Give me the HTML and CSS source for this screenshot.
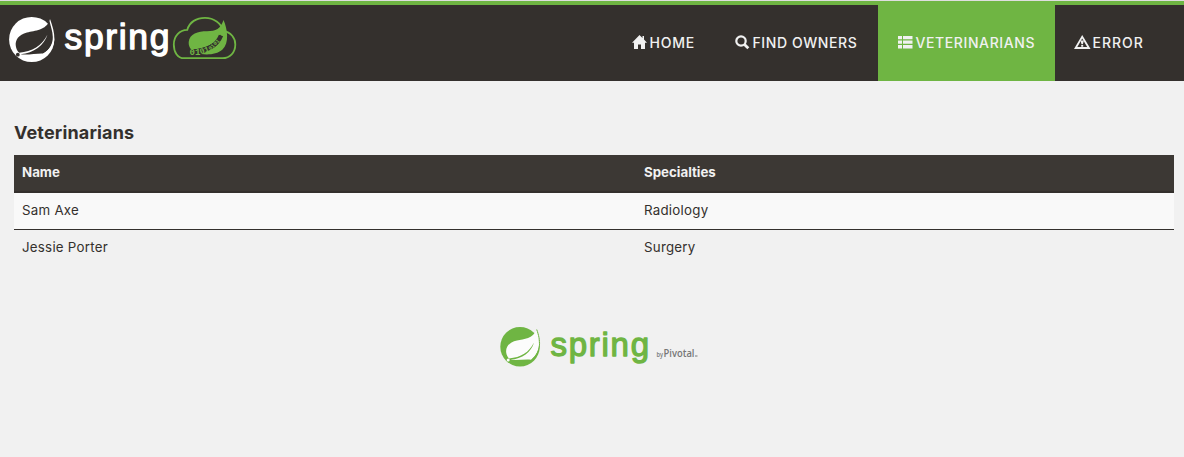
FILE: index.html
```html
<!DOCTYPE html>
<html lang="en">
<head>
<meta charset="utf-8">
<title>PetClinic</title>
<link rel="stylesheet" href="styles.css">
</head>
<body>
<header class="navbar">
  <svg class="brand" width="240" height="76" viewBox="0 5 240 76">
    <g class="brand-light">
      <circle cx="31.7" cy="39.5" r="22.6"/>
      <path class="leaf-dark" d="M49.8 20C46 30.500 35 30.500 27 32.500C18.500 34.800 15 40 15.800 46C16.200 49 17.500 51.200 19.200 52.800C32 51.500 42 46 47.500 34.500C44 45.500 34 53 20.500 54.200C27 55.300 36 53.300 43 53.500C50 50 53.500 43 53.500 37C53.500 31 51.500 25 49.800 20Z"/>
      <path d="M50 19C52.500 26 54.800 33 54.300 40C53.700 47 50 53 44 56.500L43 54C50 50 53 43 52.800 37C52.700 31 50.500 26 49.500 21Z"/>
      <circle class="leaf-dark" cx="17.800" cy="54.700" r="1.900"/>
      <text class="wordmark" x="64.500" y="49" font-size="35.500" textLength="105" lengthAdjust="spacing">spring</text>
    </g>
    <path class="cloud" d="M184 58.200C177.500 58.200 173.800 52 173.800 44.500C173.800 36 179.500 30 187.300 29.800C189.500 22 196.500 17.800 205 17.800C214 17.800 221 23 223.500 31.200C231 32.200 235.300 38 235.300 44.500C235.300 52.500 230 58.200 222.500 58.200Z"/>
    <path class="green" d="M223.500 20C220.500 29 216 31 207 31.200C198 31.200 189.500 33.500 188.700 42C188.500 45 189.400 47.500 191 49.200C205 49.500 216 43 221 34.500C222 42 214 49.500 201 54C208 55 217 54.500 222.500 49.500C229.500 43 227.500 29 223.500 20Z"/>
    <path class="band" d="M190 52C206 51.500 217 45.500 221 35.500"/>
    <text class="bits" x="189.500" y="55" font-size="9" textLength="11" lengthAdjust="spacingAndGlyphs">01</text>
    <text class="bits" x="200.800" y="54.300" font-size="8" transform="rotate(-20 200.800 54.300)">01</text>
    <text class="bits" x="210.500" y="50.500" font-size="5.500" transform="rotate(-45 210.500 50.500)">0101</text>
  </svg>
  <nav class="menu">
    <a class="item home"><svg width="15" height="15" viewBox="0 0 15 15"><path d="M7.500 0L0 7.700H2V14H6V9.500H9V14H13V7.700H15L12 4.500V1H10.500V3Z"/></svg><span>HOME</span></a>
    <a class="item find"><svg width="15" height="15" viewBox="0 0 15 15"><circle class="ring" cx="6" cy="6" r="4.700"/><path class="handle" d="M9.500 9.500L13.300 13.300"/></svg><span>FIND OWNERS</span></a>
    <a class="item vets active"><svg width="15" height="15" viewBox="0 0 15 15"><path d="M0 1H4V4.300H0ZM5 1H14.500V4.300H5ZM0 5.500H4V8.800H0ZM5 5.500H14.500V8.800H5ZM0 10H4V13.500H0ZM5 10H14.500V13.500H5Z"/></svg><span>VETERINARIANS</span></a>
    <a class="item error"><svg width="17" height="15" viewBox="0 0 17 15"><path fill-rule="evenodd" d="M8.200 0L16.600 14H0ZM8.200 3.500L3.300 12H13.200Z"/><path d="M6.500 5.500H9.900L8.900 9.300H7.500ZM7.200 10H9.200V11.700H7.200Z"/></svg><span>ERROR</span></a>
  </nav>
</header>
<main class="content">
  <h2>Veterinarians</h2>
  <table>
    <thead><tr><th class="name">Name</th><th>Specialties</th></tr></thead>
    <tbody>
      <tr class="odd"><td>Sam Axe</td><td>Radiology</td></tr>
      <tr><td>Jessie Porter</td><td>Surgery</td></tr>
    </tbody>
  </table>
</main>
<footer>
  <svg width="200" height="60" viewBox="499 317 200 60">
    <circle class="green" cx="520" cy="346.700" r="19.700"/>
    <path class="leaf-light" d="M536.500 330C533 338.500 524 339 517 340.500C509 342.300 505.500 347 506.200 352.500C506.500 355 507.500 357 509 358.400C521 357.500 529 352.500 534 342.500C531.500 352 522 359 510.500 359.800C517 360.500 524 359.200 531 359.700C536 356 539 350 539 344.500C539 339 538 334 536.500 330Z"/>
    <path class="leaf-edge" d="M536.700 329.500C540.500 340 542 351 531.500 360"/>
    <circle class="leaf-light" cx="508.200" cy="359.900" r="1.500"/>
    <text class="wordmark green-word" x="550.500" y="356" font-size="33" textLength="98.500" lengthAdjust="spacing">spring</text>
    <text class="credit" x="656.500" y="356.500" font-size="6.500" textLength="6.500" lengthAdjust="spacingAndGlyphs">by</text>
    <text class="credit" x="663.500" y="356.500" font-size="10.500" textLength="31" lengthAdjust="spacingAndGlyphs">Pivotal</text>
    <path class="mark" d="M695 356H697.500"/>
  </svg>
</footer>
</body>
</html>
```
FILE: styles.css
```css
* { box-sizing: border-box; }
body { margin: 0; background: #f1f1f1; color: #34302d; font: 13.3px/20px Inter, sans-serif; letter-spacing: .25px; border-top: 1px solid #dedede; }
.navbar { height: 80px; border-top: 4px solid #6fb543; background: #34302d; display: flex; justify-content: space-between; padding-right: 20px; }
.brand { display: block; letter-spacing: 0; }
.brand-light { fill: #fff; }
.leaf-dark { fill: #34302d; }
.leaf-light { fill: #fcfcfc; }
.green { fill: #6fb543; }
.leaf-edge { fill: none; stroke: #6fb543; stroke-width: 1; }
.cloud { fill: none; stroke: #6fb543; stroke-width: 1.8; }
.band { fill: none; stroke: #34302d; stroke-width: 4.5; }
.wordmark { font-family: "Liberation Sans", sans-serif; stroke: #fff; stroke-width: 1.3; stroke-linejoin: round; }
.green-word { fill: #6fb543; stroke: #6fb543; }
.bits { font-family: "Liberation Mono", monospace; font-weight: 700; fill: #6fb543; }
.credit { font-family: "Open Sans", sans-serif; font-weight: 600; fill: #777; }
.mark { stroke: #777; stroke-width: 1; }
.menu { display: flex; color: #f1f1f1; font: 500 14px/20px Inter, sans-serif; letter-spacing: .6px; }
.item { display: flex; gap: 3px; padding: 28px 0 0 20px; white-space: nowrap; }
.item svg { fill: #f1f1f1; margin-top: 2px; flex: none; }
.item span { margin-left: -.5px; }
.ring { fill: none; stroke: #f1f1f1; stroke-width: 2.2; }
.handle { stroke: #f1f1f1; stroke-width: 2.8; }
.home { width: 103px; letter-spacing: .8px; }
.find { width: 163px; }
.vets { width: 177px; }
.error { width: 109px; padding-left: 19px; gap: 2px; letter-spacing: 1px; }
.active { background: #6fb543; }
.content { padding: 41px 10px 0 14px; }
h2 { margin: 0 0 11px; font: 700 18px/22px Inter, sans-serif; letter-spacing: .15px; }
table { width: 100%; border-collapse: collapse; table-layout: fixed; }
th, td { padding: 7px 8px 9px; text-align: left; height: 37px; }
.name { width: 622px; }
thead { background: #3c3834; color: #f1f1f1; border-bottom: 2px solid #34302d; }
th { letter-spacing: 0; }
.odd { background: #f9f9f9; border-bottom: 1px solid #34302d; }
footer { display: flex; justify-content: center; padding: 50px 0 0 14px; letter-spacing: 0; }
```
